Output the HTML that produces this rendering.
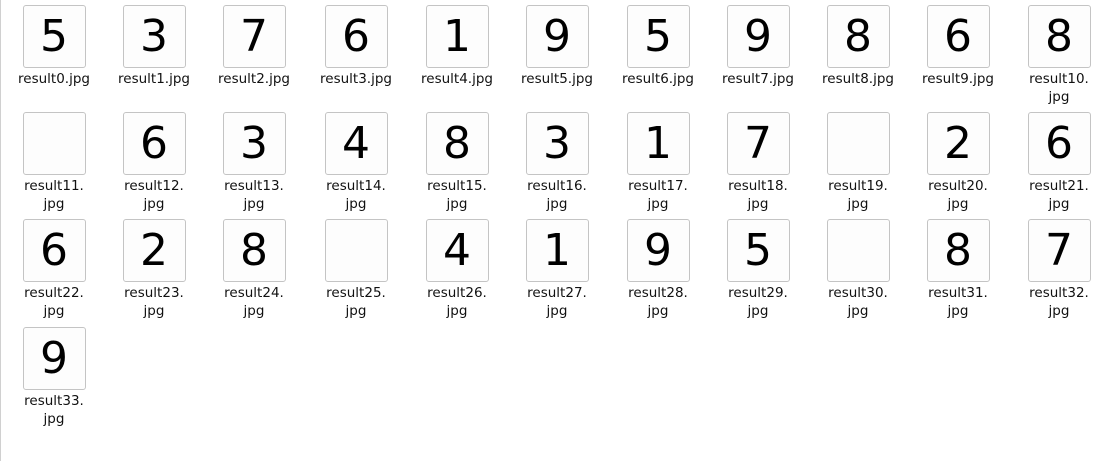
<!DOCTYPE html>
<html><head><style>
body{margin:0;width:1114px;height:461px;background:#fff;position:relative;overflow:hidden;font-family:"DejaVu Sans","Liberation Sans",sans-serif;}
.lb{position:absolute;left:0;top:0;width:1px;height:461px;background:#d0d0d0}
.i{position:absolute;width:100px;text-align:center}
.t{margin:0 auto;width:61px;height:61px;border:1px solid #c4c4c4;border-radius:3px;background:#fdfdfd;font-size:44px;line-height:61px;color:#000;text-align:center}
.l{font-size:13.5px;line-height:18px;color:#111;margin-top:2px}
</style></head><body><div class="lb"></div>
<div id="g"></div>
<script>
var digs=[5,3,7,6,1,9,5,9,8,6,8,'',6,3,4,8,3,1,7,'',2,6,6,2,8,'',4,1,9,5,'',8,7,9];
var xs=[23,123,223,325,426,526,627,727,827,927,1028];
var ys=[5,112,219,327];
var h="";
for(var n=0;n<34;n++){var r=Math.floor(n/11),c=n%11;
var lab=n>=10?("result"+n+".<br>jpg"):("result"+n+".jpg");
h+='<div class="i" style="left:'+(xs[c]+31-50)+'px;top:'+ys[r]+'px"><div class="t">'+digs[n]+'</div><div class="l">'+lab+'</div></div>';}
document.getElementById("g").innerHTML=h;
</script>
</body></html>
